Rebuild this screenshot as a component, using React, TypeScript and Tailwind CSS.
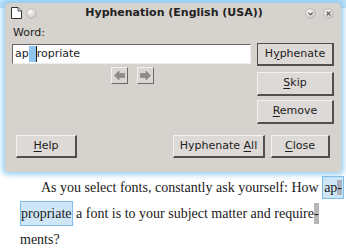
const ui = { fontFamily: '"DejaVu Sans", sans-serif' };
const serif = { fontFamily: '"Liberation Serif", serif' };

const Btn = ({
  label,
  u,
  w,
  h = "h-[24px]",
  isDefault = false,
}: {
  label: string;
  u: number;
  w: string;
  h?: string;
  isDefault?: boolean;
}) => (
  <div
    className={`${w} ${h} flex items-center justify-center bg-[#dcd9d6] text-[11px] text-[#1c1c1c] border-t border-l border-r-2 border-b-2 border-r-[#505050] border-b-[#505050] ${
      isDefault ? "border-t-[#505050] border-l-[#505050]" : "border-t-[#f3f2f1] border-l-[#f3f2f1]"
    }`}
  >
    <span>
      {label.slice(0, u)}
      <span className="underline underline-offset-2">{label[u]}</span>
      {label.slice(u + 1)}
    </span>
  </div>
);

const ArrowBtn = ({ dir }: { dir: "left" | "right" }) => (
  <div className="w-[17px] h-[17px] flex items-center justify-center bg-[#d9d6d3] border border-t-[#f3f2f1] border-l-[#f3f2f1] border-r-[#6a6a6a] border-b-[#6a6a6a]">
    <svg width="11" height="11" viewBox="0 0 11 11">
      <path
        d={dir === "left" ? "M0.5 5.5 L5 1 L5 3.5 L10.5 3.5 L10.5 7.5 L5 7.5 L5 10 Z" : "M10.5 5.5 L6 1 L6 3.5 L0.5 3.5 L0.5 7.5 L6 7.5 L6 10 Z"}
        fill="#8e8b88"
        stroke="#7a7774"
        strokeWidth="0.6"
      />
    </svg>
  </div>
);

const Circle = ({ glyph }: { glyph?: "down" | "close" }) => (
  <svg width="11" height="11" viewBox="0 0 11 11">
    <defs>
      <radialGradient id={`g${glyph ?? "n"}`} cx="0.4" cy="0.35" r="0.7">
        <stop offset="0" stopColor="#fbfbfb" />
        <stop offset="1" stopColor="#c2bfbc" />
      </radialGradient>
    </defs>
    <circle cx="5.5" cy="5.5" r="5" fill={`url(#g${glyph ?? "n"})`} stroke="#b3b0ad" strokeWidth="0.6" />
    {glyph === "down" && <path d="M3.4 4.6 L5.5 6.7 L7.6 4.6" fill="none" stroke="#555" strokeWidth="1.2" />}
    {glyph === "close" && <path d="M3.7 3.7 L7.3 7.3 M7.3 3.7 L3.7 7.3" fill="none" stroke="#555" strokeWidth="1.2" />}
  </svg>
);

export default function App() {
  return (
    <div className="w-[346px] h-[252px] bg-white overflow-hidden">
      <div className="bg-[#bfe2f7] pt-[3px] pl-[5px] h-[8px]"></div>
      <div className="-mt-[5px] ml-[5px] w-[336px] h-[169px] rounded-t-[4px] rounded-b-[3px] bg-[#d6d2ce] shadow-[0_0_5px_3px_rgba(130,195,240,0.75)] relative" style={ui}>
        {/* title bar */}
        <div className="h-[20px] flex items-center px-[6px]">
          <svg width="11" height="12" viewBox="0 0 11 12">
            <path d="M0.5 0.5 H7 L10.5 4 V11.5 H0.5 Z" fill="#fff" stroke="#333" strokeWidth="1" />
            <path d="M7 0.5 V4 H10.5" fill="#ddd" stroke="#333" strokeWidth="0.8" />
          </svg>
          <div className="ml-[4px]">
            <Circle />
          </div>
          <div className="flex-1 text-center text-[11px] font-bold text-[#222] leading-[20px] pl-[6px]">
            Hyphenation (English (USA))
          </div>
          <div className="flex gap-[7px] mr-[1px]">
            <Circle glyph="down" />
            <Circle glyph="close" />
          </div>
        </div>
        {/* body */}
        <div className="px-[7px]">
          <div className="mt-[4px] h-[12px] leading-[12px] text-[11px] text-[#222] pl-[1px]">Word:</div>
          <div className="mt-[4px] flex gap-[6px]">
            <div className="w-[239px]">
              <div className="mt-[1px] h-[20px] bg-white border border-t-[#6a6866] border-l-[#6a6866] border-r-[#eeeeee] border-b-[#eeeeee] flex items-center pl-[2px] text-[11px] text-[#1c1c1c]">
                ap<span className="bg-[#8fc5ee] text-[#8fc5ee] border-r border-[#1c1c1c]">p</span>ropriate
              </div>
              <div className="mt-[3px] flex justify-center gap-[9px] pl-[2px]">
                <ArrowBtn dir="left" />
                <ArrowBtn dir="right" />
              </div>
            </div>
            <div className="w-[77px] flex flex-col">
              <Btn label="Hyphenate" u={1} w="w-[77px]" h="h-[23px]" isDefault />
              <div className="mt-[6px]">
                <Btn label="Skip" u={0} w="w-[77px]" />
              </div>
              <div className="mt-[4px]">
                <Btn label="Remove" u={0} w="w-[77px]" />
              </div>
            </div>
          </div>
          <div className="mt-[11px] flex px-[4px]">
            <Btn label="Help" u={0} w="w-[61px]" h="h-[23px]" />
            <div className="flex-1"></div>
            <div className="flex gap-[6px]">
              <Btn label="Hyphenate All" u={10} w="w-[92px]" h="h-[23px]" />
              <Btn label="Close" u={0} w="w-[59px]" h="h-[23px]" />
            </div>
          </div>
        </div>
      </div>
      {/* document text */}
      <div className="mt-[3px] pl-[20px] text-[14px] leading-[26px] text-[#1a1a1a] whitespace-nowrap" style={serif}>
        <div className="pl-[21px]">
          As you select fonts, constantly ask yourself: How{" "}
          <span className="bg-[#cfe6f7] border border-[#7fbde9] py-[3px] px-[1px]">
            ap<span className="bg-[#a9b3bd]">-</span>
          </span>
        </div>
        <div>
          <span className="bg-[#cfe6f7] border border-[#7fbde9] py-[4px]">propriate</span> a font is to your subject matter and require
          <span className="bg-[#b8b6b4] py-[3px]">-</span>
        </div>
        <div>ments?</div>
      </div>
    </div>
  );
}
